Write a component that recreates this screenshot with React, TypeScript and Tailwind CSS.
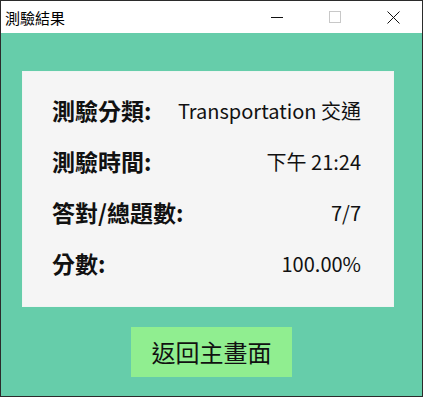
import React from "react";

const font = { fontFamily: '"Noto Sans CJK TC", "Noto Sans", sans-serif' };

function Row({ label, value }: { label: string; value: string }) {
  return (
    <div className="flex h-[51px] items-center justify-between">
      <span className="text-[23px] font-bold leading-none text-[#111]">{label}</span>
      <span className="text-[20px] leading-none text-[#111]">{value}</span>
    </div>
  );
}

export default function App() {
  return (
    <div
      className="flex h-[397px] w-[423px] flex-col border border-[#2b2b2b] bg-[#66cdaa]"
      style={font}
    >
      <div className="flex h-[32px] shrink-0 items-center bg-white">
        <span className="ml-[4px] text-[15px] leading-none text-black">測驗結果</span>
        <div className="ml-auto flex h-full items-center">
          <div className="flex h-full w-[58px] items-center justify-center">
            <svg width="12" height="12" viewBox="0 0 12 12">
              <line x1="0" y1="6.5" x2="12" y2="6.5" stroke="#111" strokeWidth="1" />
            </svg>
          </div>
          <div className="flex h-full w-[58px] items-center justify-center">
            <svg width="12" height="12" viewBox="0 0 12 12">
              <rect x="0.5" y="0.5" width="11" height="11" fill="none" stroke="#c8c8c8" strokeWidth="1" />
            </svg>
          </div>
          <div className="flex h-full w-[58px] items-center justify-center">
            <svg width="13" height="13" viewBox="0 0 13 13">
              <path d="M0.5 0.5 L12.5 12.5 M12.5 0.5 L0.5 12.5" stroke="#111" strokeWidth="1" />
            </svg>
          </div>
        </div>
      </div>
      <div className="flex flex-1 flex-col pt-[39px]">
        <div className="ml-[22px] w-[370px] bg-[#f5f5f5] pb-[17px] pl-[29px] pr-[32px] pt-[13px] shadow-[0_0_0_1px_#f0f4f2]">
          <Row label="測驗分類:" value="Transportation 交通" />
          <Row label="測驗時間:" value="下午 21:24" />
          <Row label="答對/總題數:" value="7/7" />
          <Row label="分數:" value="100.00%" />
        </div>
        <div className="mt-[21px] flex h-[50px] w-[161px] items-center justify-center self-center bg-[#90ee90]">
          <span className="text-[24px] leading-none text-[#111]">返回主畫面</span>
        </div>
      </div>
    </div>
  );
}
